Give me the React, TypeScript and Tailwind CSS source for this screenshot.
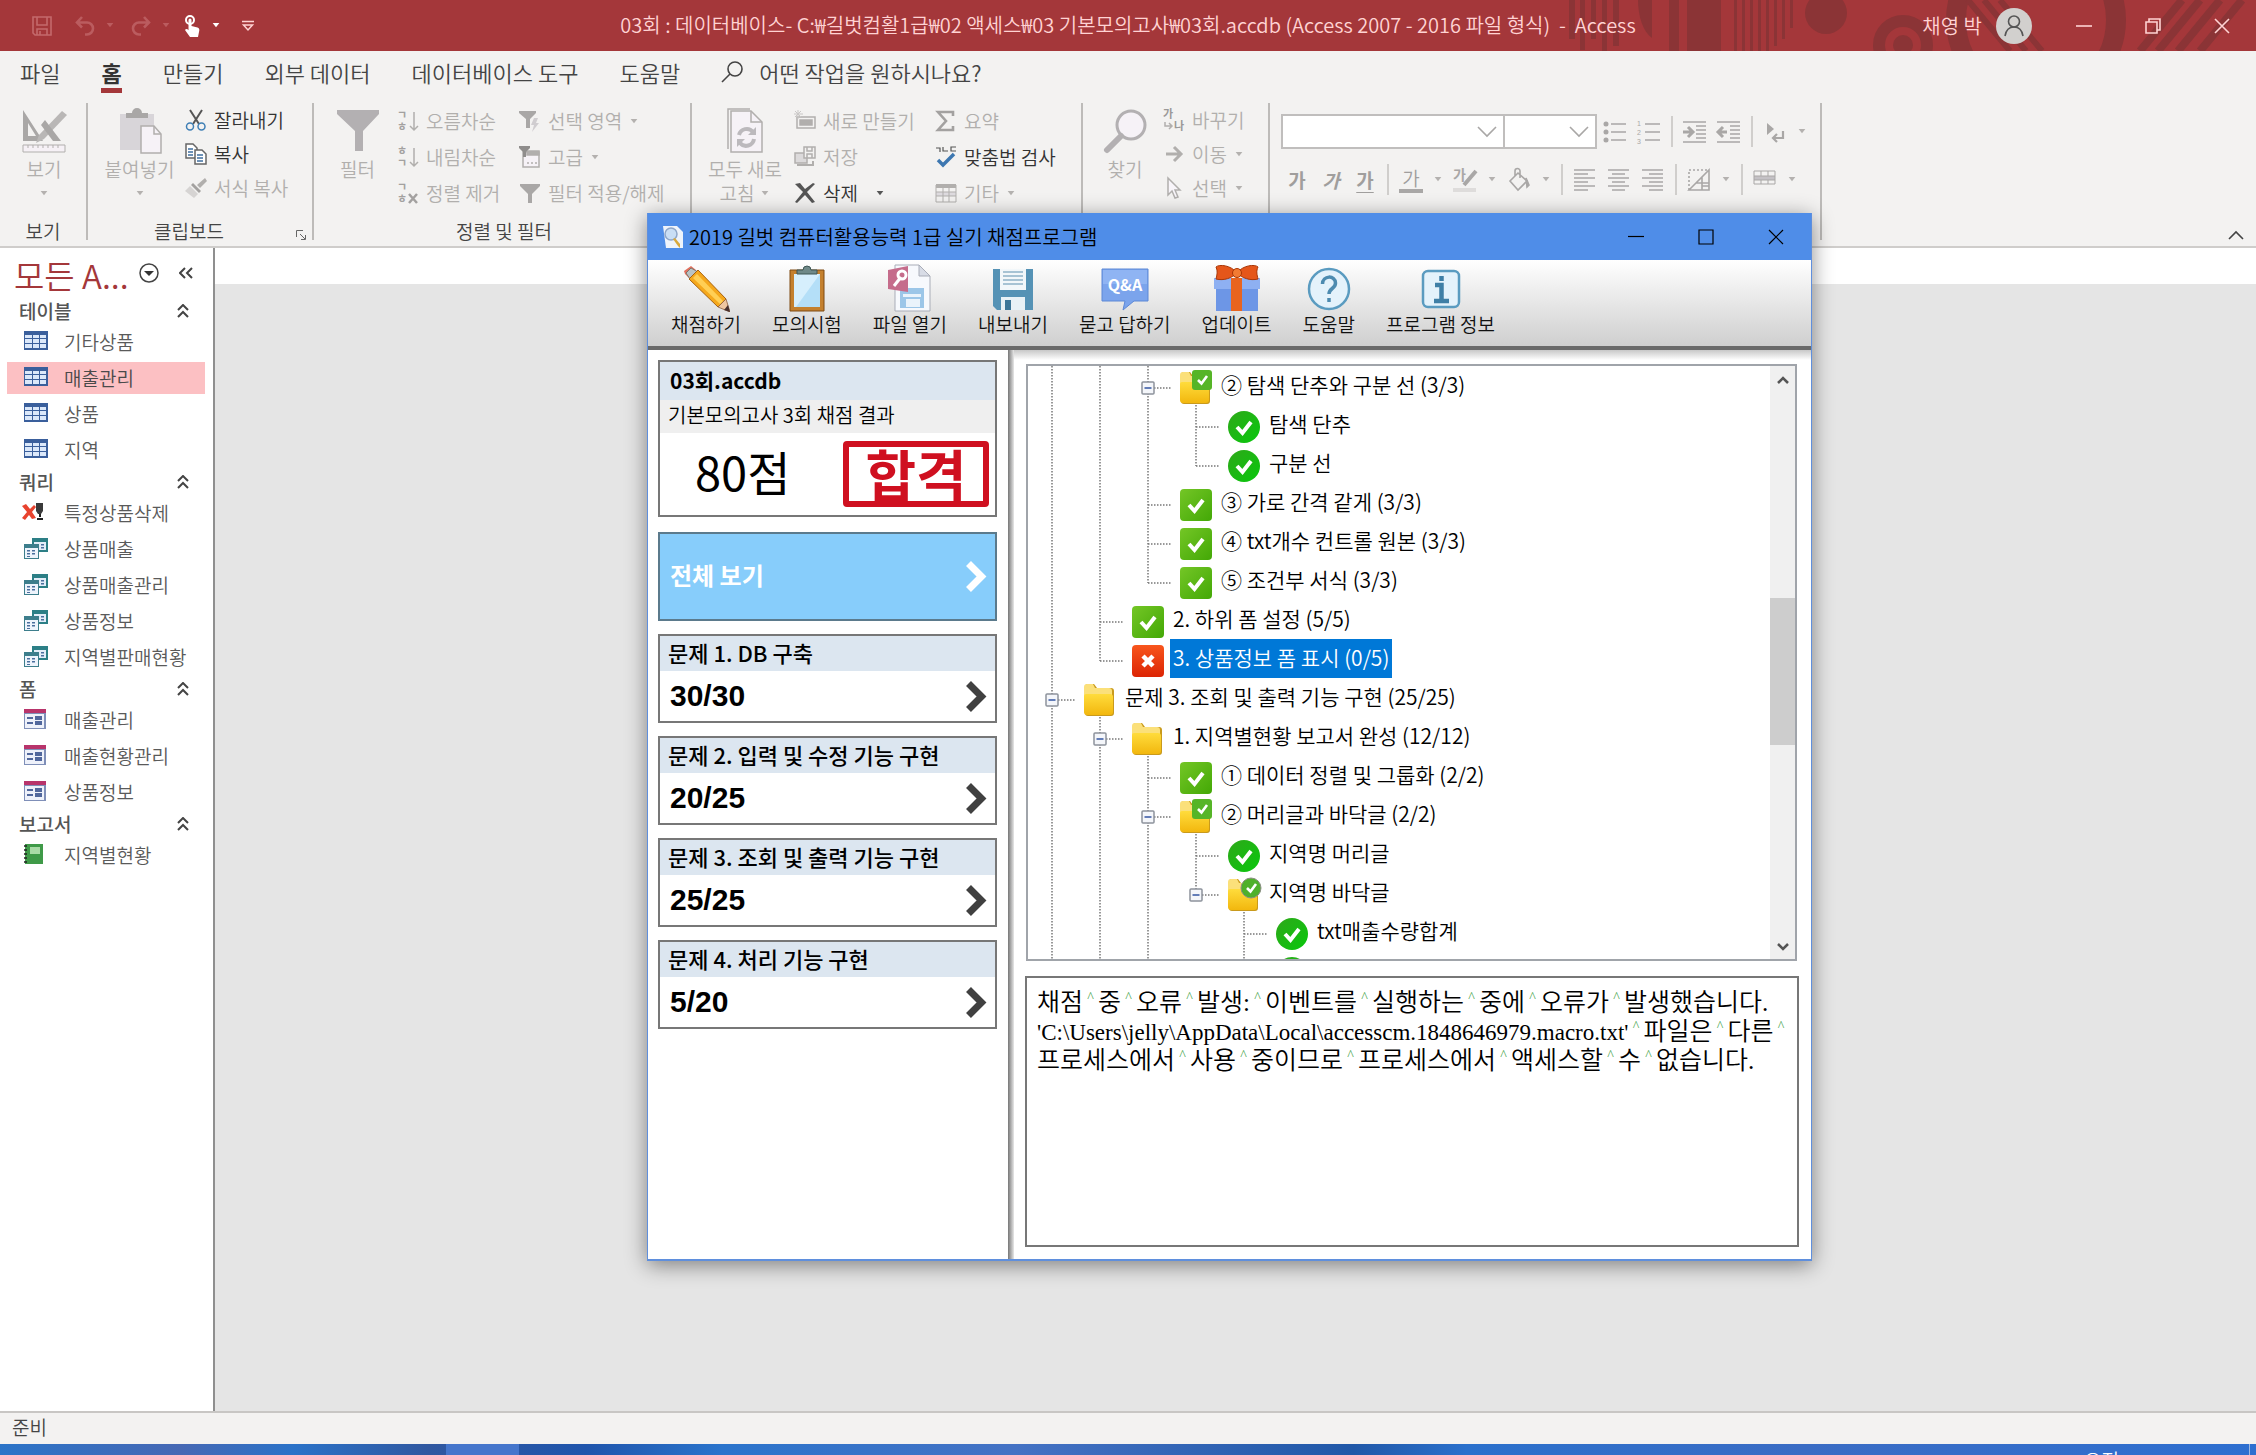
import React from "react";
import { clsx } from "clsx";

type IconProps = { className?: string };

function Caret({ className = "text-[#b4b1af]" }: IconProps) {
  return (
    <svg viewBox="0 0 10 6" className={clsx("h-[5px] w-[10px] shrink-0", className)} fill="currentColor">
      <path d="M1 0h8L5 5z" />
    </svg>
  );
}

/* ---------- title bar ---------- */

function TitlePattern() {
  return (
    <svg viewBox="0 0 690 51" className="absolute right-0 top-0 h-[51px] w-[690px]" fill="#8b3436">
      <path d="M3 0h6v39H3zM14 0h5v50h-5zM25 0h5v39h-5zM36 0h5v51h-5zM47 0h6v46h-6z" />
      <path d="M72 0h14v38C77 32 72 16 72 0z" />
      <path d="M103 0h10v51h-10zM121 0h34v51h-34zM168 0h3v51h-3zM176 0h3v51h-3zM184 0h3v51h-3zM192 0h3v51h-3zM200 0h3v51h-3zM208 0h3v46h-3zM216 0h3v39h-3zM224 0h3v28h-3z" />
      <circle cx="260" cy="13" r="21" />
      <g fill="none" stroke="#8b3436">
        <circle cx="337" cy="45" r="24" strokeWidth="12" />
        <circle cx="470" cy="20" r="80" strokeWidth="20" />
        <path d="M402 0l42 51M418 0l42 51M434 0l42 51" strokeWidth="6" />
        <path d="M574 51l42-51M592 51l42-51M612 51l42-51M634 51l42-51" strokeWidth="8" />
      </g>
      <circle cx="337" cy="45" r="10" />
    </svg>
  );
}

function TitleBar() {
  return (
    <header className="relative flex h-[51px] shrink-0 items-center overflow-hidden bg-[#a4373a] text-[#ffd3d3]">
      <TitlePattern />
      <div className="relative flex flex-1 items-center">
        <button aria-label="저장" className="ml-8 w-[43px] text-[#c4696c]">
          <svg viewBox="0 0 20 20" className="h-5 w-5" fill="none" stroke="currentColor" strokeWidth="1.6">
            <path d="M1 1h18v18H3l-2-2zM5 1v8h10V1M5 19v-6h10v6M8 15v4" />
          </svg>
        </button>
        <div className="flex w-14 items-center gap-2.5 text-[#bb5c5f]">
          <button aria-label="실행 취소">
            <svg viewBox="0 0 20 20" className="h-5 w-5" fill="none" stroke="currentColor" strokeWidth="2.6">
              <path d="M7 1L2 6.500l5 5M2 6.500h10a5.500 5.500 0 0 1 0 12H10" />
            </svg>
          </button>
          <Caret className="text-[#bb5c5f]" />
        </div>
        <div className="flex w-[52px] items-center gap-2.5 text-[#bb5c5f]">
          <button aria-label="다시 실행">
            <svg viewBox="0 0 20 20" className="h-5 w-5" fill="none" stroke="currentColor" strokeWidth="2.6">
              <path d="M13 1l5 5.500-5 5M18 6.500H8a5.500 5.500 0 0 0 0 12h2" />
            </svg>
          </button>
          <Caret className="text-[#bb5c5f]" />
        </div>
        <div className="flex w-[58px] items-center gap-2.5 text-white">
          <button aria-label="터치/마우스 모드">
            <svg viewBox="0 0 18 22" className="h-[22px] w-[18px]">
              <circle cx="7" cy="5" r="4" fill="none" stroke="#fff" strokeWidth="2" />
              <path d="M5.500 5a1.500 1.500 0 0 1 3 0v6l6 1.500c1.500.5 2 1.500 1.800 3L15 22H7l-5-7c1-1.500 2.500-1 3.500.3z" fill="#fff" />
            </svg>
          </button>
          <Caret className="text-white" />
        </div>
        <button aria-label="빠른 실행 도구 모음 사용자 지정" className="text-[#ffd3d3]">
          <svg viewBox="0 0 14 12" className="h-3 w-3.5" fill="none" stroke="currentColor" strokeWidth="1.5">
            <path d="M1 1.500h12M2.500 5h9L7 10z" />
          </svg>
        </button>
      </div>
      <h1 className="relative whitespace-pre pb-0.5 text-[20px] leading-6">
        03회 : 데이터베이스- C:₩길벗컴활1급₩02 액세스₩03 기본모의고사₩03회.accdb (Access 2007 - 2016 파일 형식)  -  Access
      </h1>
      <div className="relative flex flex-1 items-center justify-end">
        <span className="mr-3.5 text-[20px] leading-6">채영 박</span>
        <svg viewBox="0 0 36 36" className="mr-[17px] h-9 w-9">
          <circle cx="18" cy="18" r="18" fill="#d2d0ce" />
          <g fill="none" stroke="#555" strokeWidth="1.6">
            <circle cx="18" cy="13.500" r="5.500" />
            <path d="M9 28c1-6 4-9 9-9s8 3 9 9" />
          </g>
        </svg>
        <button aria-label="최소화" className="flex w-[69px] justify-center">
          <svg viewBox="0 0 16 16" className="h-4 w-4" stroke="currentColor" strokeWidth="1.6">
            <path d="M0 8h16" />
          </svg>
        </button>
        <button aria-label="이전 크기로 복원" className="flex w-[69px] justify-center">
          <svg viewBox="0 0 16 16" className="h-4 w-4" fill="none" stroke="currentColor" strokeWidth="1.6">
            <path d="M1 4h11v11H1zM4 4V1h11v11h-3" />
          </svg>
        </button>
        <button aria-label="닫기" className="flex w-[69px] justify-center">
          <svg viewBox="0 0 16 16" className="h-4 w-4" stroke="currentColor" strokeWidth="1.6">
            <path d="M1 1l14 14M15 1L1 15" />
          </svg>
        </button>
      </div>
    </header>
  );
}

/* ---------- ribbon ---------- */

const tabs = ["파일", "홈", "만들기", "외부 데이터", "데이터베이스 도구", "도움말"];

function TabBar() {
  return (
    <nav className="flex h-[52px] items-start gap-[41px] pl-5 text-[22px] leading-6 text-[#444]">
      {tabs.map((tab) => (
        <button key={tab} className={clsx("relative h-[42px] shrink-0", tab === "홈" && "font-bold text-[#333]")}>
          {tab}
          {tab === "홈" && <span className="absolute bottom-0 left-0 h-[5px] w-full bg-[#a4373a]" />}
        </button>
      ))}
      <label className="flex h-[42px] items-center gap-4">
        <svg viewBox="0 0 22 22" className="h-[22px] w-[22px]" fill="none" stroke="#444" strokeWidth="1.6">
          <circle cx="14" cy="8" r="7" />
          <path d="M9 13l-8 8" />
        </svg>
        <input
          className="w-64 bg-transparent outline-none placeholder:text-[#444]"
          placeholder="어떤 작업을 원하시나요?"
        />
      </label>
    </nav>
  );
}

type SmallButtonProps = {
  icon: React.ReactNode;
  label: string;
  enabled?: boolean;
  caret?: boolean;
  tall?: boolean;
};

function SmallButton({ icon, label, enabled, caret, tall }: SmallButtonProps) {
  return (
    <button
      className={clsx(
        "flex items-center gap-[7px] whitespace-nowrap text-[19px] leading-6",
        tall ? "h-9" : "h-[34px]",
        enabled ? "text-[#333]" : "text-[#b1afad]",
      )}
    >
      <svg viewBox="0 0 22 22" className="h-[22px] w-[22px] shrink-0 overflow-visible" fill="none" stroke="#b1afad" strokeWidth="1.5">
        {icon}
      </svg>
      {label}
      {caret && <Caret className={enabled ? "ml-2.5 text-[#555]" : "text-[#b4b1af]"} />}
    </button>
  );
}

function BigButton({ icon, lines, caret, className }: { icon: React.ReactNode; lines: string[]; caret?: "below" | "inline"; className: string }) {
  return (
    <button className={clsx("flex shrink-0 flex-col items-center pt-[5px] text-[19px] leading-6 text-[#b1afad]", className)}>
      <svg viewBox="0 0 46 46" className="mb-[3px] h-[46px] w-[46px]">
        {icon}
      </svg>
      {lines.map((line, i) => (
        <span key={line} className="flex items-center gap-1.5 whitespace-nowrap">
          {line}
          {caret === "inline" && i === lines.length - 1 && <Caret />}
        </span>
      ))}
      {caret === "below" && <Caret className="mt-2.5 text-[#b4b1af]" />}
    </button>
  );
}

function Group({ label, className, children, launcher }: { label?: string; className: string; children: React.ReactNode; launcher?: boolean }) {
  return (
    <section className={clsx("flex h-[137px] shrink-0 flex-col justify-between border-r-2 border-[#bdbbb9]", className)}>
      <div className="flex">{children}</div>
      {label && (
        <div className="relative text-center text-[19px] leading-[18px] text-[#444]">
          <span className={launcher ? "mr-7" : ""}>{label}</span>
          {launcher && (
            <button aria-label="클립보드 옵션" className="absolute bottom-0 right-1.5">
              <svg viewBox="0 0 10 10" className="h-2.5 w-2.5" fill="none" stroke="#666">
                <path d="M.5 7V.5H7M4 4l5 5M9.500 5v4.500H5" />
              </svg>
            </button>
          )}
        </div>
      )}
    </section>
  );
}

const G = "#b1afad";

const viewIcon = (
  <g>
    <path d="M2 2v31h20zM7 15l8 13H7z" fill="#a9a7a6" fillRule="evenodd" />
    <path d="M41 3l5 4-23 24-8 4 3-8z" fill="#b9b7b6" />
    <path d="M10 12l12 21M24 12l16 21h-8L20 17z" fill="#a9a7a6" />
    <path d="M2 37h42v7H2z" fill="#f6f1f6" stroke={G} />
    <path d="M7 37v3M12 37v3M17 37v3M22 37v3M27 37v3M32 37v3M37 37v3" stroke={G} />
  </g>
);
const pasteIcon = (
  <g>
    <path d="M3 6h34v36H3z" fill="#d8d5d9" />
    <path d="M9 10V5h6a5 5 0 0 1 10 0h6v5z" fill="#a9a7a6" />
    <path d="M24 18h13l7 8v19H24z" fill="#f6f2f7" stroke={G} strokeWidth="1.500" />
    <path d="M37 18v8h7" fill="none" stroke={G} strokeWidth="1.500" />
  </g>
);
const filterIcon = <path d="M2 2h42v4L28 23v20h-8V23L2 6z" fill="#b3b0b2" />;
const refreshIcon = (
  <g fill="none" stroke={G} strokeWidth="1.500">
    <path d="M6 41V1h22" />
    <path d="M9 3h20l11 11v30H9z" fill="#f6f2f7" />
    <path d="M29 3v11h11" />
    <path d="M17 27a8 8 0 0 1 14-3M32 31a8 8 0 0 1-14 4" strokeWidth="4" stroke="#bcb9bd" />
    <path d="M34 19v8h-8zM15 39v-8h8z" fill="#bcb9bd" stroke="none" />
  </g>
);
const findIcon = (
  <g fill="none" stroke="#b3b0b2">
    <circle cx="29" cy="17" r="14" strokeWidth="3" fill="#f6f2f7" />
    <path d="M19 28L5 42" strokeWidth="6" strokeLinecap="round" />
  </g>
);

/* letters of the sort glyphs are kept as text so they stay readable */
function SortGlyph({ a, b, cross }: { a: string; b: string; cross?: boolean }) {
  return (
    <g>
      <text x="0" y="9" fontSize="11" fontWeight="bold" fill="#a3a1a0" stroke="none">{a}</text>
      <text x="0" y="21" fontSize="11" fontWeight="bold" fill="#a3a1a0" stroke="none">{b}</text>
      {cross ? <path d="M12 12l8 9M20 12l-8 9" strokeWidth="2.500" stroke="#a3a1a0" /> : <path d="M17 2v18M13 16l4 4 4-4" />}
    </g>
  );
}

const miniFunnel = "M1 2h20v2l-8 8v9h-4v-9L1 4z";

function Sep() {
  return <span className="h-[31px] w-0.5 shrink-0 bg-[#d0cecc]" />;
}

function FormatIcon({ label, children }: { label: string; children: React.ReactNode }) {
  return (
    <button aria-label={label} className="shrink-0">
      <svg viewBox="0 0 24 24" className="h-6 w-6 overflow-visible" fill="none" stroke="#a9a7a6" strokeWidth="1.6">
        {children}
      </svg>
    </button>
  );
}

function Combo({ label, className }: { label: string; className: string }) {
  return (
    <span className={clsx("relative h-[35px] shrink-0", className)}>
      <select aria-label={label} className="h-full w-full appearance-none border-2 border-[#c0bebd] bg-white" />
      <svg viewBox="0 0 20 12" className="pointer-events-none absolute right-2 top-3 h-3 w-5" fill="none" stroke="#a9a7a6" strokeWidth="1.6">
        <path d="M1 1l9 9 9-9" />
      </svg>
    </span>
  );
}

function FontGroup() {
  return (
    <section className="flex h-[137px] w-[552px] shrink-0 flex-col gap-[15px] border-r-2 border-[#bdbbb9] pl-[11px] pt-[11px]">
      <div className="flex items-center gap-2.5">
        <div className="-mr-1 flex">
          <Combo label="글꼴" className="w-[224px]" />
          <Combo label="글꼴 크기" className="-ml-0.5 w-[94px]" />
        </div>
        <FormatIcon label="글머리 기호">
          <path d="M8 4h15M8 12h15M8 20h15" />
          <path d="M3 3.900v.2M3 11.900v.2M3 19.900v.2" strokeWidth="5" strokeLinecap="round" />
        </FormatIcon>
        <FormatIcon label="번호 매기기">
          <path d="M8 4h15M8 12h15M8 20h15" />
          <g fontSize="7" fill="#a9a7a6" stroke="none" className="font-['Liberation_Sans',sans-serif]">
            <text x="0" y="6">1</text>
            <text x="0" y="15">2</text>
            <text x="0" y="24">3</text>
          </g>
        </FormatIcon>
        <Sep />
        <FormatIcon label="들여쓰기">
          <path d="M0 2h23M13 6h10M13 10h10M13 14h10M13 18h10M0 22h23" />
          <path d="M0 12h9M5 7l5 5-5 5" strokeWidth="3" />
        </FormatIcon>
        <FormatIcon label="내어쓰기">
          <path d="M0 2h23M13 6h10M13 10h10M13 14h10M13 18h10M0 22h23" />
          <path d="M10 12H2M6 7l-5 5 5 5" strokeWidth="3" />
        </FormatIcon>
        <Sep />
        <FormatIcon label="텍스트 방향">
          <path d="M4 3l7 6-7 6z" fill="#a9a7a6" stroke="none" />
          <path d="M20 11v7h-9M14 14l-4 4 4 4" strokeWidth="2.200" />
        </FormatIcon>
        <Caret />
      </div>
      <div className="flex items-center gap-2.5 pl-1 text-[19px] leading-6 text-[#a09e9d]">
        <button className="w-6 font-bold">가</button>
        <button className="w-6 font-bold italic">가</button>
        <button className="w-6 font-bold underline underline-offset-4">가</button>
        <Sep />
        <button className="h-[27px] w-6 border-b-4 border-[#a9a7a6] leading-[22px]">가</button>
        <Caret />
        <FormatIcon label="강조 색">
          <text x="0" y="12" fontSize="14" fontWeight="bold" fill="#a9a7a6" stroke="none">가</text>
          <path d="M23 3L11 17" strokeWidth="4" />
          <path d="M0 22h23" strokeWidth="4" stroke="#dedcdb" />
        </FormatIcon>
        <Caret />
        <FormatIcon label="채우기 색">
          <path d="M11 5l9 8-9 9-8-9zM8 8V3a2.500 2.500 0 0 1 5 0v7" />
          <path d="M19 10l3 7-2 2z" fill="#a9a7a6" />
        </FormatIcon>
        <Caret />
        <Sep />
        <FormatIcon label="왼쪽 맞춤">
          <path d="M1 2h21M1 6h14M1 10h21M1 14h14M1 18h21M1 22h14" />
        </FormatIcon>
        <FormatIcon label="가운데 맞춤">
          <path d="M1 2h21M5 6h13M1 10h21M5 14h13M1 18h21M5 22h13" />
        </FormatIcon>
        <FormatIcon label="오른쪽 맞춤">
          <path d="M1 2h21M8 6h14M1 10h21M8 14h14M1 18h21M8 22h14" />
        </FormatIcon>
        <Sep />
        <FormatIcon label="눈금선">
          <path d="M2 22V2h20" strokeDasharray="2 2" />
          <path d="M2 22L22 2v20zM9 15h13M15 9v13M15 18h7" />
        </FormatIcon>
        <Caret />
        <Sep />
        <FormatIcon label="대체 행 색">
          <path d="M1 8h21v4H1z" fill="#c4c1c5" stroke="none" />
          <path d="M1 3h21v13H1zM1 8h21M1 12h21M8 3v5M15 3v5M8 12v4M15 12v4" strokeWidth="1" />
        </FormatIcon>
        <Caret />
      </div>
    </section>
  );
}

function Ribbon() {
  return (
    <div className="relative flex shrink-0 overflow-hidden border-b-2 border-[#cfcdcb] pb-1.5">
      <Group label="보기" className="w-[88px]">
        <BigButton icon={viewIcon} lines={["보기"]} caret="below" className="w-[88px]" />
      </Group>
      <Group label="클립보드" className="w-[226px] pl-1.5" launcher>
        <BigButton icon={pasteIcon} lines={["붙여넣기"]} caret="below" className="w-[91px]" />
        <div>
          <SmallButton
            enabled
            label="잘라내기"
            icon={
              <g>
                <path d="M5 1l9 14M17 1L8 15" stroke="#555" strokeWidth="2" />
                <circle cx="5" cy="17.500" r="3.500" stroke="#3f7fb5" />
                <circle cx="16.500" cy="17.500" r="3.500" stroke="#3f7fb5" />
              </g>
            }
          />
          <SmallButton
            enabled
            label="복사"
            icon={
              <g stroke="#666">
                <path d="M1 1h7l4 4v10H1z" fill="#fff" />
                <path d="M10 7h7l4 4v10H10z" fill="#fff" />
                <path d="M3 6h5M3 9h5M3 12h5M12 12h6M12 15h6M12 18h6" stroke="#3f6fa0" />
              </g>
            }
          />
          <SmallButton
            label="서식 복사"
            icon={
              <g stroke="none">
                <path d="M20 1l2 3-7 7-3-3z" fill={G} />
                <path d="M8 6l8 8-2 2-8-8z" fill="#a3a1a0" />
                <path d="M5 9l8 8-4 4L0 14z" fill="#d6d4d3" />
              </g>
            }
          />
        </div>
      </Group>
      <Group label="정렬 및 필터" className="w-[378px] pl-1">
        <BigButton icon={filterIcon} lines={["필터"]} className="w-[79px]" />
        <div className="w-[122px]">
          <SmallButton tall label="오름차순" icon={<SortGlyph a="ㄱ" b="ㅎ" />} />
          <SmallButton tall label="내림차순" icon={<SortGlyph a="ㅎ" b="ㄱ" />} />
          <SmallButton tall label="정렬 제거" icon={<SortGlyph a="ㄱ" b="ㅎ" cross />} />
        </div>
        <div>
          <SmallButton
            tall
            caret
            label="선택 영역"
            icon={
              <g stroke="none">
                <path d="M0 1h17v2l-6 6v9H7V9L0 3z" fill="#a9a7a6" />
                <path d="M15 8h4l-2 5h3l-7 9 2-7h-3z" fill="#d0cdd0" />
              </g>
            }
          />
          <SmallButton
            tall
            caret
            label="고급"
            icon={
              <g>
                <path d="M4 6h16v15H4z" fill="#f6f2f7" />
                <path d="M8 5h12v4H8z" fill={G} />
                <path d="M0 0h11v2L7 6v5H4V6L0 2z" fill="#8f8d8c" stroke="none" />
                <path d="M8 17h2M12 17h2M16 17h2" />
              </g>
            }
          />
          <SmallButton tall label="필터 적용/해제" icon={<path d={miniFunnel} fill="#a9a7a6" stroke="none" />} />
        </div>
      </Group>
      <Group className="w-[391px] pl-1">
        <BigButton icon={refreshIcon} lines={["모두 새로", "고침"]} caret="inline" className="w-[98px]" />
        <div className="w-[141px]">
          <SmallButton
            tall
            label="새로 만들기"
            icon={
              <g>
                <path d="M3 7h18v11H3z" />
                <path d="M6 10h12v5H6z" fill={G} />
                <path d="M4 0v9M0 4h9M1 1l6 6M7 1L1 7" stroke="#c9c7c6" strokeWidth="1" />
              </g>
            }
          />
          <SmallButton
            tall
            label="저장"
            icon={
              <g>
                <path d="M1 7h12v10H1z" fill="#dcdadb" />
                <path d="M3 19h16v-4" strokeWidth="2" />
                <path d="M10 1h11v11H10zM13 1v4h5V1M13 12V8h5v4" fill="#f3f2f1" />
              </g>
            }
          />
          <SmallButton
            tall
            enabled
            caret
            label="삭제"
            icon={<path d="M1 2l5-1 5 6 8-6 2 1-8 8 8 10-3 1-7-8-8 8-2-1 8-10z" fill="#555" stroke="none" />}
          />
        </div>
        <div>
          <SmallButton tall label="요약" icon={<path d="M18 6V2H3l8 9-8 9h15v-4" strokeWidth="2.600" stroke="#a3a1a0" />} />
          <SmallButton
            tall
            enabled
            label="맞춤법 검사"
            icon={
              <g>
                <path d="M1 2h4v4M8 1v4h5M21 1h-5v4h5" stroke="#555" strokeWidth="1.200" />
                <path d="M3 14l5 5L19 8" stroke="#3d77b0" strokeWidth="3.500" />
              </g>
            }
          />
          <SmallButton
            tall
            caret
            label="기타"
            icon={
              <g>
                <path d="M1 10h20v4H1z" fill="#dedbdf" stroke="none" />
                <path d="M1 3h20v17H1zM1 10h20M1 14h20M8 5v15M14 5v15" strokeWidth="1" />
                <path d="M1 2h20v4H1z" fill={G} stroke="none" />
              </g>
            }
          />
        </div>
      </Group>
      <Group className="w-[187px] pl-1">
        <BigButton icon={findIcon} lines={["찾기"]} className="w-[76px]" />
        <div>
          <SmallButton
            label="바꾸기"
            icon={
              <g>
                <text x="0" y="9" fontSize="11" fontWeight="bold" fill="#9b9998" stroke="none">가</text>
                <text x="11" y="21" fontSize="11" fontWeight="bold" fill="#9b9998" stroke="none">나</text>
                <path d="M2 13v4h7M6 14l3 3-3 3" />
              </g>
            }
          />
          <SmallButton caret label="이동" icon={<path d="M3 11h14M11 4l7 7-7 7" strokeWidth="3" />} />
          <SmallButton caret label="선택" icon={<path d="M5 1v17l4-4 3 7 3-1-3-7h5z" fill="#f8f5fa" />} />
        </div>
      </Group>
      <FontGroup />
      <button aria-label="리본 메뉴 축소" className="absolute bottom-1.5 right-3">
        <svg viewBox="0 0 16 10" className="h-2.5 w-4" fill="none" stroke="#444" strokeWidth="1.6">
          <path d="M1 9l7-7 7 7" />
        </svg>
      </button>
    </div>
  );
}

/* ---------- navigation pane ---------- */

function TableIcon() {
  return (
    <g>
      <path d="M0 1h24v19H0z" fill="#3a5f9c" />
      <path d="M1 5h7v3H1zM9 5h6v3H9zM16 5h6v3h-6zM1 9h7v4H1zM9 9h6v4H9zM16 9h6v4h-6zM1 14h7v4H1zM9 14h6v4H9zM16 14h6v4h-6z" fill="#dbe8fa" />
    </g>
  );
}

function QueryIcon() {
  return (
    <g>
      <path d="M8 1h16v14H8z" fill="#2c7f86" />
      <path d="M10 5h12v8H10z" fill="#e3edf8" />
      <path d="M0 7h15v15H0z" fill="#3d7e8c" />
      <path d="M1 11h13v10H1z" fill="#eef4fc" />
      <path d="M3 13h3v1.500H3zM8 13h3v1.500H8zM3 16h3v1.500H3zM8 16h3v1.500H8zM3 19h3v1H3zM17 7h3v1.500h-3zM17 10h3v1.500h-3z" fill="#4a6f9d" />
    </g>
  );
}

function DeleteQueryIcon() {
  return (
    <g>
      <path d="M-2 5l4-2 4 5 4-4 2 2-4 5 4 6-4 1-3-4-4 5-3-2 5-6z" fill="#e8432e" />
      <path d="M12 2h7v8l-2 3h-3l-2-3z" fill="#3a3a3a" />
      <path d="M15 13h2v3h-2zM13 17h6v2h-6z" fill="#222" />
    </g>
  );
}

function FormIcon() {
  return (
    <g>
      <path d="M0 1h22v20H0z" fill="#7f8fb8" />
      <path d="M0 1h22v4H0z" fill="#b8346b" />
      <path d="M1 6h19v14H1z" fill="#eef1fa" />
      <path d="M3 9h6v2H3zM3 14h6v2H3zM11 8h7v4h-7zM11 13h7v4h-7z" fill="#51679c" />
    </g>
  );
}

function ReportIcon() {
  return (
    <g>
      <path d="M1 1h18v20H1z" fill="#3f9a48" />
      <path d="M6 4h10v7H6z" fill="#a9dba6" />
      <path d="M0 3h3M0 7h3M0 11h3M0 15h3M0 19h3" stroke="#222" strokeWidth="1.500" />
    </g>
  );
}

const navGroups = [
  { title: "테이블", icon: TableIcon, items: ["기타상품", "매출관리", "상품", "지역"] },
  { title: "쿼리", icon: QueryIcon, items: ["특정상품삭제", "상품매출", "상품매출관리", "상품정보", "지역별판매현황"] },
  { title: "폼", icon: FormIcon, items: ["매출관리", "매출현황관리", "상품정보"] },
  { title: "보고서", icon: ReportIcon, items: ["지역별현황"] },
];

function NavPane() {
  return (
    <aside className="flex w-[215px] shrink-0 flex-col border-r-2 border-[#8f8f8f] bg-white pr-2 text-[#5a5a5a]">
      <div className="flex h-[49px] shrink-0 items-center pl-3.5">
        <h2 className="w-[125px] whitespace-nowrap pt-1 text-[33px] leading-10 text-[#a4373a]">모든 A...</h2>
        <button aria-label="개체 범주">
          <svg viewBox="0 0 20 20" className="h-5 w-5" fill="none" stroke="#444" strokeWidth="1.500">
            <circle cx="10" cy="10" r="9" />
            <path d="M5 8h10l-5 5z" fill="#333" stroke="none" />
          </svg>
        </button>
        <button aria-label="탐색 창 축소" className="ml-5">
          <svg viewBox="0 0 14 12" className="h-3 w-3.5" fill="none" stroke="#444" strokeWidth="2">
            <path d="M6 1L1 6l5 5M13 1L8 6l5 5" />
          </svg>
        </button>
      </div>
      {navGroups.map((group, g) => {
        const Icon = group.icon;
        return (
          <section key={group.title}>
            <button className="flex h-[27px] w-full items-center justify-between pl-[19px] pr-4 text-[19px] font-medium leading-6 text-[#555]">
              {group.title}
              <svg viewBox="0 0 12 14" className="h-3.5 w-3" fill="none" stroke="#444" strokeWidth="2">
                <path d="M1 6l5-5 5 5M1 13l5-5 5 5" />
              </svg>
            </button>
            <ul className="pl-[7px]">
              {group.items.map((item, i) => (
                <li key={item} className="flex h-9 items-center">
                  <a
                    href="#"
                    className={clsx(
                      "flex h-8 w-full items-center gap-4 pl-[17px] text-[19px] leading-6",
                      g === 0 && i === 1 && "bg-[#fcc0c3] text-[#4a4a4a]",
                    )}
                  >
                    <svg viewBox="0 0 24 24" className="h-6 w-6 shrink-0 overflow-visible">
                      {item === "특정상품삭제" ? <DeleteQueryIcon /> : <Icon />}
                    </svg>
                    {item}
                  </a>
                </li>
              ))}
            </ul>
          </section>
        );
      })}
    </aside>
  );
}

/* ---------- grading window ---------- */

const tools: { label: string; icon: React.ReactNode }[] = [
  {
    label: "채점하기",
    icon: (
      <g>
        <path d="M2 7l7-5 5 4-7 8-4-4z" fill="#e2705e" />
        <path d="M9 4l7 4-8 7-4-6z" fill="#b9c3c4" stroke="#6d6a5c" strokeWidth=".8" />
        <path d="M7 15l9-9 28 29-8 8z" fill="#f5a81c" stroke="#a8620f" strokeWidth="1" />
        <path d="M11 14l4-4 26 27-3 3z" fill="#ffcf55" />
        <path d="M36 43l8-8 4 13z" fill="#efc6a0" stroke="#8a5a3b" strokeWidth=".8" />
        <path d="M42 46l4-5 2 7z" fill="#47302e" />
      </g>
    ),
  },
  {
    label: "모의시험",
    icon: (
      <g>
        <path d="M7 6h34v41H7z" fill="#c4802e" stroke="#7e4b12" />
        <path d="M11 10h26v33H11z" fill="#d6effd" />
        <path d="M37 10L13 43h24z" fill="#b4dff8" />
        <path d="M14 10V6h6a4 4 0 0 1 8 0h6v4z" fill="#6f8988" stroke="#3f5755" />
      </g>
    ),
  },
  {
    label: "파일 열기",
    icon: (
      <g>
        <path d="M9 1h24l11 11v35H9z" fill="#f7f9fd" stroke="#a9adb8" />
        <path d="M33 1v11h11z" fill="#d8dce6" stroke="#a9adb8" />
        <path d="M14 24h24v20H14z" fill="#9cc6e8" />
        <path d="M17 30h18v3H17zM20 35h14v8H20z" fill="#eaf3fb" />
        <path d="M2 6l20-4v26L2 25z" fill="#c56c8b" />
        <path d="M8 22l7-9" stroke="#fff" strokeWidth="3" />
        <circle cx="16" cy="11" r="4" fill="none" stroke="#fff" strokeWidth="3" />
      </g>
    ),
  },
  {
    label: "내보내기",
    icon: (
      <g>
        <path d="M4 5h40v41H8l-4-4z" fill="#5592b5" />
        <path d="M11 5h26v21H11z" fill="#f2f7fa" />
        <path d="M14 8h20M14 12h20M14 16h20M14 20h20" stroke="#8fb3c7" strokeWidth="1.500" />
        <path d="M12 33h24v13H12z" fill="#e8f1f6" />
        <path d="M16 36h6v10h-6z" fill="#3c7698" />
      </g>
    ),
  },
  {
    label: "묻고 답하기",
    icon: (
      <g>
        <path d="M1 5h46v32H33L22 46l2-9H1z" fill="#7ba4ec" stroke="#5d88d6" />
        <path d="M2 6h44v14H2z" fill="#8fb4f3" />
        <text x="24" y="27" textAnchor="middle" fontSize="16" fontWeight="bold" fill="#fff">Q&amp;A</text>
      </g>
    ),
  },
  {
    label: "업데이트",
    icon: (
      <g>
        <path d="M3 20h42v27H3z" fill="#6d96e6" />
        <path d="M1 14h46v11H1z" fill="#8eb0f2" />
        <path d="M18 14h11v33H18z" fill="#e8641f" />
        <path d="M24 9C18 1 6 0 3 3c2 4 1 8 0 12 8 2 16-1 21-6zM24 9c6-8 18-9 21-6-2 4-1 8 0 12-8 2-16-1-21-6z" fill="#e5561a" stroke="#a93606" />
        <circle cx="24" cy="9" r="4.500" fill="#f27b33" stroke="#a93606" />
      </g>
    ),
  },
  {
    label: "도움말",
    icon: (
      <g>
        <circle cx="24" cy="25" r="20" fill="#e4f2fb" stroke="#5a9bc0" strokeWidth="2.500" />
        <path d="M17.500 20c0-9 13-9 13-1 0 6-6.500 5-6.500 11M24 34v4" fill="none" stroke="#4d8bb0" strokeWidth="3.500" />
      </g>
    ),
  },
  {
    label: "프로그램 정보",
    icon: (
      <g>
        <rect x="6" y="7" width="36" height="36" rx="5" fill="#e4f2fb" stroke="#5a9bc0" strokeWidth="2.500" />
        <path d="M24.500 12v5M18 21h6.500v16M17 37h15" fill="none" stroke="#3f7fa6" strokeWidth="4.500" />
      </g>
    ),
  },
];

function WindowTitle() {
  return (
    <div className="flex h-[47px] items-center bg-[#4f8de8] pl-[13px] text-black">
      <svg viewBox="0 0 24 24" className="h-6 w-6">
        <path d="M2 1h14l6 6v16H5z" fill="#eef3fb" />
        <circle cx="10" cy="9" r="6" fill="#c9def5" stroke="#8fa6c8" strokeWidth="1.500" />
        <path d="M12 14l5 7 2 2v-4l-5-6z" fill="#d9a93c" />
      </svg>
      <h2 className="ml-1 flex-1 text-[20px] leading-6">2019 길벗 컴퓨터활용능력 1급 실기 채점프로그램</h2>
      <button aria-label="최소화" className="flex w-[70px] justify-center">
        <svg viewBox="0 0 16 16" className="h-4 w-4" stroke="#000" strokeWidth="1.2">
          <path d="M0 7.500h16" />
        </svg>
      </button>
      <button aria-label="최대화" className="flex w-[70px] justify-center">
        <svg viewBox="0 0 16 16" className="h-4 w-4" fill="none" stroke="#000" strokeWidth="1.2">
          <path d="M1 1h14v14H1z" />
        </svg>
      </button>
      <button aria-label="닫기" className="flex w-[70px] justify-center">
        <svg viewBox="0 0 16 16" className="h-4 w-4" stroke="#000" strokeWidth="1.2">
          <path d="M1 1l14 14M15 1L1 15" />
        </svg>
      </button>
    </div>
  );
}

function Chevron({ className }: IconProps) {
  return (
    <svg viewBox="0 0 21 31" className={clsx("h-[31px] w-[21px]", className)} fill="none" stroke="currentColor" strokeWidth="7">
      <path d="M2.500 2.500l13 13-13 13" />
    </svg>
  );
}

const scores = [
  { title: "문제 1. DB 구축", score: "30/30" },
  { title: "문제 2. 입력 및 수정 기능 구현", score: "20/25" },
  { title: "문제 3. 조회 및 출력 기능 구현", score: "25/25" },
  { title: "문제 4. 처리 기능 구현", score: "5/20" },
];

function ScorePanel() {
  return (
    <div className="flex w-[360px] shrink-0 flex-col gap-[13px] bg-white pl-2.5 pr-[11px] pt-2.5">
      <section className="mb-0.5 border-2 border-[#777]">
        <h3 className="flex h-[38px] items-center bg-[#dce6f0] pb-0.5 pl-2.5 text-[21px] font-bold leading-6 text-black">03회.accdb</h3>
        <p className="flex h-[33px] items-center bg-[#efefef] pb-1 pl-2 text-[20px] leading-6 text-black">기본모의고사 3회 채점 결과</p>
        <div className="flex h-[82px] items-center justify-between pl-[35px] pr-1.5">
          <strong className="pb-1.5 text-[47px] font-normal leading-[60px] text-black">80점</strong>
          <span className="flex h-[66px] w-[146px] items-center justify-center rounded-sm border-[6px] border-[#cf1020] pb-1 text-[55px] font-bold leading-[50px] text-[#cf1020]">
            합격
          </span>
        </div>
      </section>
      <button className="flex h-[89px] items-center justify-between border-2 border-[#5b7a8c] bg-[#87cdfb] pl-2.5 pr-2 text-[24px] font-bold leading-7 text-white">
        <span className="pb-1">전체 보기</span>
        <Chevron className="text-white" />
      </button>
      {scores.map(({ title, score }) => (
        <button key={title} className="border-2 border-[#777] bg-white text-left text-black">
          <span className="flex h-[35px] items-center bg-[#dce6f0] pb-1 pl-2 text-[22px] font-medium leading-6">{title}</span>
          <span className="flex h-[50px] items-center justify-between pl-2.5 pr-2 font-['Liberation_Sans',sans-serif] text-[30px] font-bold leading-8">
            {score}
            <Chevron className="text-[#404040]" />
          </span>
        </button>
      ))}
    </div>
  );
}

/* v: line through, t: branch, l: last branch, x: expander, e: last expander, _: empty */
const guidePaths: Record<string, string> = {
  v: "M24 0V39",
  t: "M24 0V39M24 22H48",
  l: "M24 0V22M24 22H48",
  x: "M24 0V39M24 22H48",
  e: "M24 0V22M24 22H48",
  _: "",
};

function Guide({ kind }: { kind: string }) {
  return (
    <svg viewBox="0 0 48 39" className="h-[39px] w-12 shrink-0">
      <path d={guidePaths[kind]} fill="none" stroke="#777" strokeWidth="1.500" strokeDasharray="1.500 1.500" />
      {(kind === "x" || kind === "e") && (
        <g>
          <rect x="18" y="16" width="12" height="12" rx="1" fill="#f4f6fa" stroke="#8d939c" strokeWidth="1.500" />
          <path d="M20.500 22h7" stroke="#3f5fa8" strokeWidth="1.600" />
        </g>
      )}
    </svg>
  );
}

type NodeKind = "box" | "circle" | "wrong" | "folder" | "folderBox" | "folderCircle";

function TreeGradients() {
  return (
    <svg className="absolute h-0 w-0" aria-hidden="true">
      <defs>
        <linearGradient id="tree-green" x1="0" y1="0" x2="1" y2="1">
          <stop offset="0" stopColor="#74c626" />
          <stop offset="1" stopColor="#43a806" />
        </linearGradient>
        <linearGradient id="tree-round" x1="0" y1="0" x2="1" y2="1">
          <stop offset="0" stopColor="#2fa81a" />
          <stop offset="1" stopColor="#08c80c" />
        </linearGradient>
        <linearGradient id="tree-red" x1="0" y1="0" x2="0" y2="1">
          <stop offset="0" stopColor="#f8561d" />
          <stop offset="1" stopColor="#dc2404" />
        </linearGradient>
        <linearGradient id="tree-folder" x1="0" y1="0" x2="0" y2="1">
          <stop offset="0" stopColor="#ffdc3c" />
          <stop offset="1" stopColor="#f2b70e" />
        </linearGradient>
      </defs>
    </svg>
  );
}

function NodeIcon({ kind }: { kind: NodeKind }) {
  const badge = kind === "folderBox" || kind === "folderCircle";
  return (
    <svg viewBox="0 0 48 39" className="h-[39px] w-12 shrink-0">
      {kind === "box" && <rect x="8" y="6" width="32" height="32" rx="4" fill="url(#tree-green)" />}
      {kind === "circle" && <circle cx="24" cy="22" r="16" fill="url(#tree-round)" />}
      {kind === "wrong" && <rect x="8" y="6" width="32" height="32" rx="4" fill="url(#tree-red)" />}
      {(kind === "box" || kind === "circle") && (
        <path d="M17 22l5.500 6L31 17" fill="none" stroke="#fff" strokeWidth="4" />
      )}
      {kind === "wrong" && <path d="M19 17l10 10M29 17L19 27" stroke="#fff" strokeWidth="4.500" />}
      {(kind === "folder" || badge) && (
        <g>
          <path d="M9 9q0-3 3-3h6l3 4h14q3 0 3 3v22q0 3-3 3H12q-3 0-3-3z" fill="#c99a1c" />
          <path d="M8 9q0-3 3-3h6l2 4h14q3 0 3 3v8H8z" fill="#fbe07a" />
          <path d="M8 18q0-2 2-2h24q3 0 3 3v15q0 3-3 3H11q-3 0-3-3z" fill="url(#tree-folder)" />
        </g>
      )}
      {kind === "folderBox" && <rect x="20" y="4" width="20" height="20" rx="3" fill="#56b527" />}
      {kind === "folderCircle" && <circle cx="31" cy="15" r="10" fill="#4fb02b" stroke="#8b8f84" />}
      {kind === "folderBox" && <path d="M26 14l3.500 3.500L35 10" fill="none" stroke="#fff" strokeWidth="2.600" />}
      {kind === "folderCircle" && <path d="M27 15l3.500 3.500L36 11" fill="none" stroke="#fff" strokeWidth="2.600" />}
    </svg>
  );
}

const treeRows: { guides: string; icon: NodeKind; text: string; selected?: boolean }[] = [
  { guides: "vvx", icon: "folderBox", text: "② 탐색 단추와 구분 선 (3/3)" },
  { guides: "vvvt", icon: "circle", text: "탐색 단추" },
  { guides: "vvvl", icon: "circle", text: "구분 선" },
  { guides: "vvt", icon: "box", text: "③ 가로 간격 같게 (3/3)" },
  { guides: "vvt", icon: "box", text: "④ txt개수 컨트롤 원본 (3/3)" },
  { guides: "vvl", icon: "box", text: "⑤ 조건부 서식 (3/3)" },
  { guides: "vt", icon: "box", text: "2. 하위 폼 설정 (5/5)" },
  { guides: "vl", icon: "wrong", text: "3. 상품정보 폼 표시 (0/5)", selected: true },
  { guides: "x", icon: "folder", text: "문제 3. 조회 및 출력 기능 구현 (25/25)" },
  { guides: "vx", icon: "folder", text: "1. 지역별현황 보고서 완성 (12/12)" },
  { guides: "vvt", icon: "box", text: "① 데이터 정렬 및 그룹화 (2/2)" },
  { guides: "vvx", icon: "folderBox", text: "② 머리글과 바닥글 (2/2)" },
  { guides: "vvvt", icon: "circle", text: "지역명 머리글" },
  { guides: "vvve", icon: "folderCircle", text: "지역명 바닥글" },
  { guides: "vvv_t", icon: "circle", text: "txt매출수량합계" },
  { guides: "vvv_t", icon: "circle", text: "" },
];

function ResultTree() {
  return (
    <div className="relative ml-px mr-0.5 flex h-[597px] overflow-hidden border-2 border-[#a0a4aa] bg-white">
      <TreeGradients />
      <ul className="min-w-0 flex-1 text-[21px] leading-6 text-black">
        {treeRows.map((row, i) => (
          <li key={i} className="flex h-[39px] items-center">
            {row.guides.split("").map((kind, g) => (
              <Guide key={g} kind={kind} />
            ))}
            <NodeIcon kind={row.icon} />
            <span className={clsx("-ml-0.5 flex h-[39px] items-center px-[3px] pb-1", row.selected && "bg-[#0078d7] text-white")}>
              {row.text}
            </span>
          </li>
        ))}
      </ul>
      <div className="flex w-[25px] flex-col items-center bg-[#f0f0f0]">
        <svg viewBox="0 0 12 8" className="mt-2.5 h-2 w-3" fill="none" stroke="#555" strokeWidth="2.500">
          <path d="M1 7l5-5 5 5" />
        </svg>
        <div className="mt-[214px] h-[147px] w-full bg-[#cdcdcd]" />
        <svg viewBox="0 0 12 8" className="mb-2 mt-auto h-2 w-3" fill="none" stroke="#555" strokeWidth="2.500">
          <path d="M1 1l5 5 5-5" />
        </svg>
      </div>
    </div>
  );
}

const errorLines = [
  "채점 중 오류 발생: 이벤트를 실행하는 중에 오류가 발생했습니다.",
  "'C:\\Users\\jelly\\AppData\\Local\\accesscm.1848646979.macro.txt' 파일은 다른 ",
  "프로세스에서 사용 중이므로 프로세스에서 액세스할 수 없습니다.",
];

function ErrorBox() {
  return (
    <div className="h-[271px] border-2 border-[#777] bg-white pl-2.5 pt-2.5 font-['Liberation_Serif','Noto_Sans_CJK_KR',serif] text-[25px] leading-[29px] text-black">
      {errorLines.map((line) => (
        <p key={line} className="h-[29px] whitespace-nowrap">
          {line.split(" ").map((word, i) => (
            <React.Fragment key={i}>
              {i > 0 && <span className="inline-block w-[15px] text-center align-top text-sm leading-5 text-[#3fa34d]">^</span>}
              {word.includes("\\") ? <span className="text-[23px]">{word}</span> : word}
            </React.Fragment>
          ))}
        </p>
      ))}
    </div>
  );
}

function GradingWindow() {
  return (
    <div className="absolute left-[647px] top-[213px] flex w-[1165px] flex-col border-x border-b-2 border-[#5f8fdd] bg-white shadow-[0_4px_20px_rgba(0,0,0,0.45)]">
      <WindowTitle />
      <div className="flex h-[90px] items-start gap-[31px] border-b-4 border-[#6a6a6a] bg-gradient-to-b from-white to-[#cfcfcf] pl-[23px] pt-1">
        {tools.map(({ label, icon }) => (
          <button key={label} className="flex flex-col items-center whitespace-nowrap text-[19px] leading-6 text-[#111]">
            <svg viewBox="0 0 48 48" className="h-12 w-12">
              {icon}
            </svg>
            {label}
          </button>
        ))}
      </div>
      <div className="flex">
        <ScorePanel />
        <div className="w-1.5 shrink-0 bg-gradient-to-r from-[#777] to-[#e8e8e8]" />
        <div className="flex min-w-0 flex-1 flex-col gap-[15px] bg-gradient-to-b from-[#c8c8c8] to-white to-[10px] pb-3 pl-[11px] pr-3 pt-3.5">
          <ResultTree />
          <ErrorBox />
        </div>
      </div>
    </div>
  );
}

export default function App() {
  return (
    <div className="relative flex h-screen flex-col overflow-hidden bg-[#f3f2f1] font-['Noto_Sans_CJK_KR','Noto_Sans',sans-serif] font-[350]">
      <TitleBar />
      <TabBar />
      <Ribbon />
      <main className="flex min-h-0 flex-1">
        <NavPane />
        <div className="flex min-w-0 flex-1 flex-col bg-[#e5e5e5]">
          <div className="h-9 bg-white" />
        </div>
      </main>
      <footer className="flex h-[33px] shrink-0 items-center border-t-2 border-[#c8c6c4] pb-1 pl-3 text-[19px] leading-6 text-[#444]">준비</footer>
      <div className="flex h-[11px] shrink-0 items-start justify-end overflow-hidden bg-[linear-gradient(90deg,#2b74c8_0%,#4668b4_8%,#2a72c8_13%,#3058a0_19%,#1f55ac_26%,#2a74cc_32%,#4472c4_45%,#2058a8_60%,#2a70cc_65%,#3a6cc4_80%,#2d6fd0_100%)]">
        <div className="ml-[446px] mr-auto h-full w-[73px] bg-[#4576cc]" />
        <span className="mr-[130px] pt-1 text-[19px] leading-6 text-white">오전</span>
        <span className="mr-1.5 h-full w-px bg-[#9db8e0]" />
      </div>
      <GradingWindow />
    </div>
  );
}
